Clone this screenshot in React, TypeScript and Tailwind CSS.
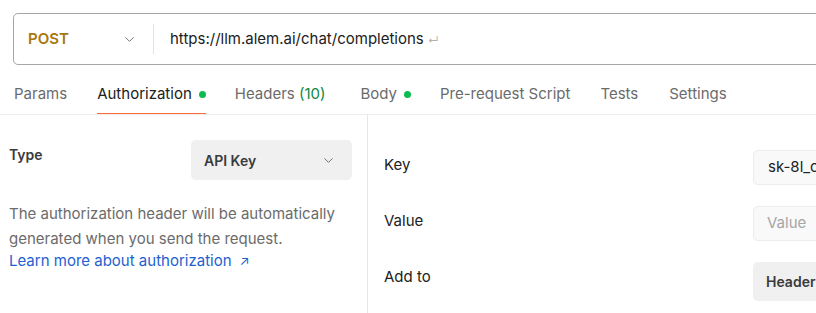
import { ChevronDown } from "lucide-react";

const tabs = [
  { label: "Params", ml: "ml-0" },
  { label: "Authorization", dot: true, active: true, ml: "ml-[30px]" },
  { label: "Headers", count: "(10)", ml: "ml-[29px]" },
  { label: "Body", dot: true, ml: "ml-[35px]" },
  { label: "Pre-request Script", ml: "ml-[29px]" },
  { label: "Tests", ml: "ml-[30px]" },
  { label: "Settings", ml: "ml-[31px]" },
];

export default function App() {
  return (
    <div className="w-[816px] h-[313px] overflow-hidden bg-white font-['Inter',sans-serif] text-[#212121]">
      {/* URL bar */}
      <div className="pt-[13px] pl-[13px]">
        <div className="w-[900px] h-[52px] flex items-center border border-[#a6a6a6] rounded-[5px]">
          <div className="w-[139px] flex items-center justify-between pl-[14px] pr-[16px]">
            <span className="text-[15px] font-semibold text-[#a8780e]">POST</span>
            <ChevronDown className="w-[15px] h-[15px] text-[#6b6b6b]" strokeWidth={1.5} />
          </div>
          <div className="w-px h-[30px] bg-[#e2e2e2]" />
          <div className="pl-[16px] flex items-center gap-[4px]">
            <span className="text-[15px] text-[#212121]">https://llm.alem.ai/chat/completions</span>
            <span className="text-[11px] text-[#b0b0b0] mt-[2px]">↵</span>
          </div>
        </div>
      </div>

      {/* Tabs */}
      <div className="flex h-[50px] pl-[14px] border-b border-[#ececec]">
        {tabs.map((t) => (
          <div
            key={t.label}
            className={`${t.ml} flex items-center pt-[10px] gap-[7px] text-[15px] border-b ${
              t.active ? "border-[#ff6c37] text-[#212121]" : "border-transparent text-[#6b6b6b]"
            }`}
          >
            <span>
              {t.label}
              {t.count && <span className="text-[#0b8a3e]"> {t.count}</span>}
            </span>
            {t.dot && <span className="w-[7px] h-[7px] rounded-full bg-[#0cbb52]" />}
          </div>
        ))}
      </div>

      {/* Body */}
      <div className="flex h-[200px]">
        <div className="w-[368px] shrink-0 border-r border-[#e6e6e6] pl-[9px] pr-[15px] pt-[25px]">
          <div className="flex items-start justify-between">
            <span className="text-[14px] font-semibold text-[#3b3b3b] mt-[4px]">Type</span>
            <div className="w-[161px] h-[40px] bg-[#f0f0f0] rounded-[5px] flex items-center justify-between pl-[13px] pr-[16px]">
              <span className="text-[14px] font-semibold text-[#3b3b3b]">API Key</span>
              <ChevronDown className="w-[15px] h-[15px] text-[#6b6b6b]" strokeWidth={1.5} />
            </div>
          </div>
          <p className="mt-[21px] text-[15px] leading-[25px] text-[#6b6b6b]">
            The authorization header will be automatically generated when you send the request.
          </p>
          <a className="w-fit text-[15px] leading-[20px] text-[#1d5fd0] flex items-center gap-[8px]">
            Learn more about authorization
            <span className="text-[13px]">↗</span>
          </a>
        </div>

        <div className="flex-1 pl-[16px] pt-[35px] flex flex-col gap-[21px]">
          <div className="flex items-center h-[35px]">
            <span className="w-[369px] shrink-0 text-[15px] text-[#212121] -mt-[5px]">Key</span>
            <div className="w-[200px] shrink-0 h-[35px] bg-[#f9f9f9] border border-[#ececec] rounded-[5px] flex items-center pl-[14px] text-[15px] text-[#212121]">
              sk-8l_c9RzQ
            </div>
          </div>
          <div className="flex items-center h-[35px]">
            <span className="w-[369px] shrink-0 text-[15px] text-[#212121] -mt-[5px]">Value</span>
            <div className="w-[200px] shrink-0 h-[35px] bg-[#f9f9f9] border border-[#ececec] rounded-[5px] flex items-center pl-[13px] text-[15px] text-[#a6a6a6]">
              Value
            </div>
          </div>
          <div className="flex items-center h-[39px]">
            <span className="w-[369px] shrink-0 text-[15px] text-[#212121] -mt-[9px]">Add to</span>
            <div className="w-[200px] shrink-0 h-[39px] bg-[#f0f0f0] rounded-[5px] flex items-center pl-[13px] text-[14px] font-semibold text-[#3b3b3b]">
              Header
            </div>
          </div>
        </div>
      </div>
    </div>
  );
}
